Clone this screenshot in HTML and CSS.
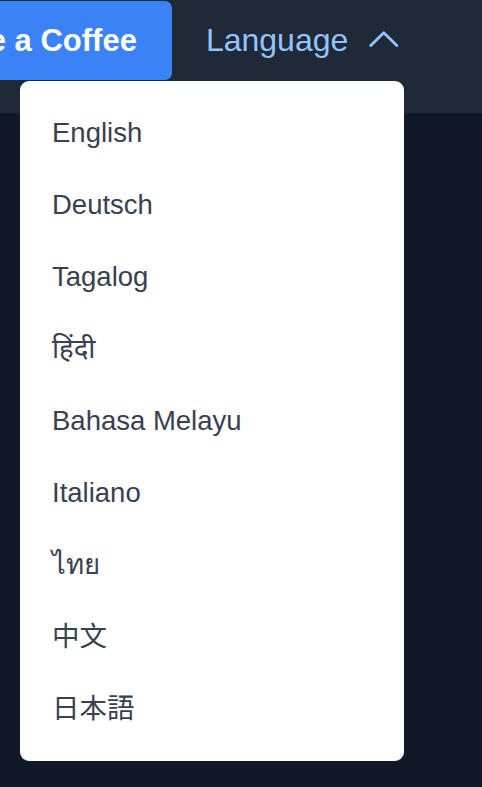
FILE: index.html
```html
<!DOCTYPE html>
<html lang="en">
<head>
<meta charset="utf-8">
<title>Language menu</title>
<link rel="stylesheet" href="styles.css">
</head>
<body>
<header class="topbar">
  <a class="coffee-btn" href="#">Buy me a Coffee</a>
  <button class="lang-btn" type="button">
    <span class="lang-label">Language</span>
    <svg class="chevron" width="30" height="17" viewBox="0 0 30 17" aria-hidden="true">
      <polyline points="1.8,14.6 14.8,1.8 27.8,14.6" fill="none" stroke="#93c5fd" stroke-width="2.8" stroke-linecap="round" stroke-linejoin="round"/>
    </svg>
  </button>
  <ul class="lang-menu">
    <li class="lang-item">English</li>
    <li class="lang-item">Deutsch</li>
    <li class="lang-item">Tagalog</li>
    <li class="lang-item" lang="hi">हिंदी</li>
    <li class="lang-item">Bahasa Melayu</li>
    <li class="lang-item">Italiano</li>
    <li class="lang-item" lang="th">ไทย</li>
    <li class="lang-item" lang="zh">中文</li>
    <li class="lang-item jp" lang="ja">日本語</li>
  </ul>
</header>
<main class="page"></main>
</body>
</html>
```

FILE: styles.css
```css
html, body {
  margin: 0;
  padding: 0;
  background: #111827;
  font-family: "Liberation Sans", Arial, "Noto Sans", "Noto Sans CJK SC", sans-serif;
}

body {
  display: flex;
  flex-direction: column;
  min-height: 100vh;
}

.topbar {
  position: relative;
  z-index: 5;
  display: flex;
  align-items: flex-start;
  flex: none;
  height: 113px;
  box-sizing: border-box;
  padding-top: 1px;
  background: #1f2937;
}

.coffee-btn {
  display: flex;
  align-items: center;
  flex: none;
  height: 79px;
  margin-left: -141px;
  padding: 0 35px;
  border-radius: 7px;
  background: #3b82f6;
  color: #ffffff;
  font-size: 31px;
  font-weight: 700;
  text-decoration: none;
  white-space: nowrap;
}

.lang-btn {
  display: flex;
  align-items: center;
  gap: 21px;
  height: 79px;
  margin-left: 34px;
  padding: 0;
  border: 0;
  background: transparent;
  color: #93c5fd;
  font-family: inherit;
  font-size: 32px;
  cursor: pointer;
}

.chevron {
  display: block;
  margin-top: -2px;
}

.lang-menu {
  position: absolute;
  z-index: 10;
  left: 20px;
  top: 81px;
  width: 384px;
  margin: 0;
  padding: 16px 0;
  list-style: none;
  background: #ffffff;
  border-radius: 9px;
}

.lang-item {
  height: 72px;
  line-height: 72px;
  padding-left: 32px;
  color: #374151;
  font-size: 27.5px;
  white-space: nowrap;
}

.lang-item.jp {
  font-family: "Liberation Sans", "Noto Sans CJK JP", sans-serif;
}

.page {
  flex: 1;
  background: #111827;
}
```
